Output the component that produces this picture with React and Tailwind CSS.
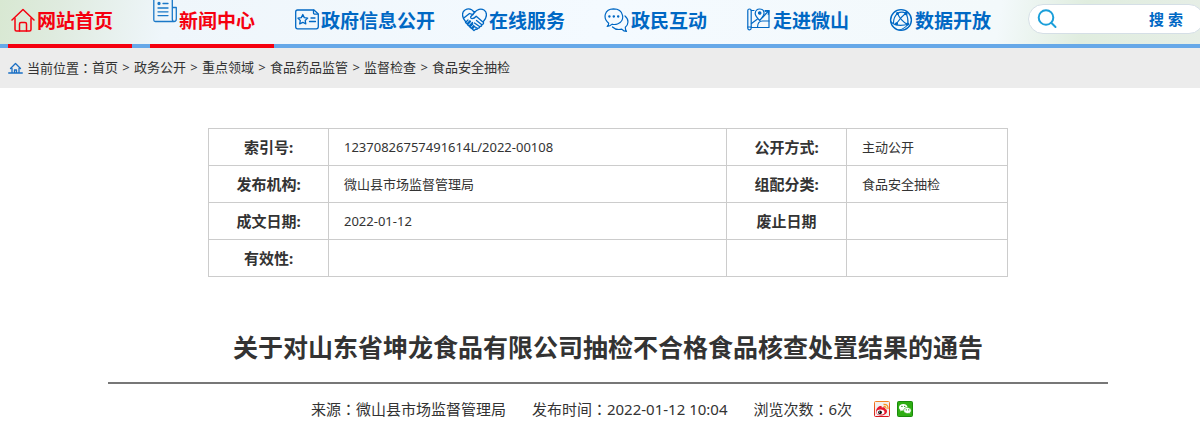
import React, { useState } from "react";
import clsx from "clsx";

const line = {
  fill: "none",
  stroke: "currentColor",
  strokeLinecap: "round",
  strokeLinejoin: "round",
  "aria-hidden": true,
};

function HomeIcon() {
  return (
    <svg width="24" height="24" viewBox="0 0 24 24" strokeWidth="1.500" {...line}>
      <path d="M1 12 12 1.500 23 12" />
      <path d="M4 10.500V21.500q0 1.500 1.500 1.500h13q1.500 0 1.500-1.500V10.500" />
      <path d="M8.500 23v-7q0-1.500 1.500-1.500h4q1.500 0 1.500 1.500v7" />
    </svg>
  );
}

function NewsIcon() {
  return (
    <svg width="24" height="23" viewBox="0 0 24 23" strokeWidth="1.300" {...line}>
      <path d="M.8 0v20q0 1.500 1.500 1.500h18.700q2.300 0 2.300-2.500V7.500h-4V19q0 2.500 2 2.500M19.300 8V0" />
      <circle cx="6" cy="3.500" r="1" fill="currentColor" />
      <path d="M10 3.500h5M5 8h10M5 11.800h10M5 15.600h10" />
    </svg>
  );
}

function InfoIcon() {
  return (
    <svg width="24" height="24" viewBox="0 0 24 24" strokeWidth="1.300" {...line}>
      <path d="M2.500 2h16.500l4.300 4V18.500q0 2.300-2 2.300H2.500Q.7 20.800.7 19V4q0-2 1.800-2z" />
      <path d="M18.500 2.200v2.500q0 1.500 1.500 1.500h3" />
      <path d="m7.800 6.500 1.500 3.100 3.400.5-2.500 2.400.6 3.400-3-1.600-3.100 1.600.6-3.400-2.400-2.400 3.400-.5z" />
      <path d="M16 10h4M14.500 13.500h6" />
    </svg>
  );
}

function ServiceIcon() {
  return (
    <svg width="25" height="24" viewBox="0 0 25 24" strokeWidth="1.300" {...line}>
      <path d="M3.500 13.500C-.5 9-.3 4 3 2c3.200-1.800 7-.8 9.500 2.500C15 1.200 19 .2 22 2c3.200 2 3.500 7-.6 11.500" />
      <path d="m1.800 10 5.700-4.500 3.500 1.200" />
      <path d="M12.500 4.500 8.700 8.700q-.3 1.800 1.500 2 2-.2 4-2.500l7.300 6.300q.4 1.800-1.500 2 0 1.900-2 1.900-.3 1.900-2 1.700-.5 1.700-2.300 1.200" />
      <path d="m14.500 12.500 5 4M12.500 15l5 3.500M11.500 18l4.200 2.500" />
      <path d="m6 12-2.500 2.500 1.500 1.300 3-3M8.500 13.500 5.500 16.700 7 18l3.500-3.500M10.800 16l-3 3 1.500 1.300 2.500-2.500M12 19l-1.800 2 1.800 1.600 2-1.600" />
    </svg>
  );
}

function ChatIcon() {
  return (
    <svg width="25" height="25" viewBox="0 0 25 25" strokeWidth="1.200" {...line}>
      <path d="M4.700 15.200C-1.500 10.200.5 1 9.500.8c10.500 0 12.200 12.200 4 15.200-2.500.9-4 .5-5.300.2-1.500 1.500-3 2.300-5 2.300 1.200-1 1.500-2 1.500-3.300z" />
      <path d="M21 8c4.200 3.500 3.600 8.500.3 11.200-.1 2 .4 3 1.200 4.300-2 0-3.500-.8-4.800-2.300-4 .8-7 0-9.200-2.200" />
      <path d="M5.300 8.500h.2M9.700 8.500h.2M14.100 8.500h.2" strokeWidth="2.300" />
    </svg>
  );
}

function MapIcon() {
  return (
    <svg width="24" height="24" viewBox="0 0 24 24" strokeWidth="1.200" {...line}>
      <path d="M.8 2.500q0-1.500 1.700-1.500t1.700 1.500v17.500q0 1.800-1.700 1.800T.8 20z" />
      <path d="M4.200 2.500H7M18 2.500h4v17H4.200M.8 19h3.400" />
      <path d="M12.700 12.500C9.200 9 8 7.300 8.200 5.200 8.500 2.500 10.500 1 12.700 1s4.200 1.500 4.400 4c.1 2.500-1.500 4.300-4.400 7.500z" />
      <circle cx="12.700" cy="5" r="1.200" fill="currentColor" />
      <path d="m4.500 15.500 5.700-4.300M15.500 9.500l5.500-6M18 3.500l4-.8-.8 3.800M10.500 19.500q0-6.500 5-6.500H22" />
    </svg>
  );
}

function DataIcon() {
  return (
    <svg width="24" height="24" viewBox="0 0 24 24" strokeWidth="1.100" {...line}>
      <circle cx="12" cy="12" r="10.400" strokeWidth="1.400" />
      <path d="M8.500 5.500C5.500 8 4.500 11 4.500 15M8.500 5.500q4-2.500 8-.5M8.500 5.500q3 7 10 11" />
      <path d="M17 5q2.500 5 2 11.500M17 5Q12 9 7.500 15.500M2 14q6 5.500 18 2M10 22q5-1 9-5.500" />
      <circle cx="8.500" cy="5.500" r=".9" fill="currentColor" />
      <circle cx="17" cy="5.500" r="1.100" fill="currentColor" />
      <circle cx="7.500" cy="15.700" r="1" fill="currentColor" />
      <circle cx="18.500" cy="16" r="1" fill="currentColor" />
    </svg>
  );
}

function WeiboIcon() {
  return (
    <svg width="16" height="16" viewBox="0 0 16 16" aria-hidden="true">
      <defs>
        <linearGradient id="weibo" x1="0" y1="0" x2="0" y2="1">
          <stop offset="0" stopColor="#f58220" />
          <stop offset="1" stopColor="#d7141e" />
        </linearGradient>
      </defs>
      <rect x=".5" y=".5" width="15" height="15" rx="1" fill="#f3efed" stroke="url(#weibo)" />
      <path d="M2 10.500C2 7.500 5 4.500 7 5c1 .3.800 1.300.8 1.700 2-.8 3.500-.4 3.200 1.300 1.500.3 2 1.200 2 2.300C13 13 10 14.500 7 14.500s-5-1.500-5-4z" fill="#e6162d" />
      <ellipse cx="6.500" cy="11" rx="4" ry="2.600" fill="#fff" />
      <circle cx="6" cy="11.300" r="1.900" fill="#111" />
      <circle cx="5.400" cy="11" r=".6" fill="#fff" />
      <path d="M9.500 5.500q2.700-.4 2.500 2.300M9.500 3.300Q14.500 3 14 8" fill="none" stroke="#f7941d" strokeWidth="1.200" />
    </svg>
  );
}

function WechatIcon() {
  return (
    <svg width="16" height="16" viewBox="0 0 16 16" aria-hidden="true">
      <rect x=".5" y=".5" width="15" height="15" rx="1" fill="#2eae12" stroke="#1b8a0c" />
      <path d="M6.300 3C3.800 3 2 4.500 2 6.400c0 1.100.6 2 1.500 2.600L3.200 10.500l1.600-.9c1 .2 1.700.2 2.500 0C10 9.300 10.800 7.800 10.500 6 10.200 4.300 8.500 3 6.300 3z" fill="#fff" />
      <path d="M10.300 6.500C8.200 6.500 6.700 7.800 6.700 9.500s1.700 3 3.800 3c.5 0 1-.1 1.400-.2l1.500.8-.4-1.300c.8-.6 1.200-1.400 1.200-2.300 0-1.700-1.700-3-3.900-3z" fill="#fff" stroke="#2eae12" strokeWidth=".6" />
      <path d="M4.900 5.400h.1M7.700 5.400h.1M9.200 8.800h.1M11.700 8.800h.1" stroke="#1b8a0c" strokeWidth="1.200" strokeLinecap="round" />
    </svg>
  );
}

const menu = [
  { name: "网站首页", icon: HomeIcon, active: true },
  { name: "新闻中心", icon: NewsIcon, active: true, raised: true },
  { name: "政府信息公开", icon: InfoIcon },
  { name: "在线服务", icon: ServiceIcon },
  { name: "政民互动", icon: ChatIcon },
  { name: "走进微山", icon: MapIcon },
  { name: "数据开放", icon: DataIcon },
];

const path = ["首页", "政务公开", "重点领域", "食品药品监管", "监督检查", "食品安全抽检"];

const rows = [
  ["索引号:", "12370826757491614L/2022-00108", "公开方式:", "主动公开"],
  ["发布机构:", "微山县市场监督管理局", "组配分类:", "食品安全抽检"],
  ["成文日期:", "2022-01-12", "废止日期", ""],
  ["有效性:", "", "", ""],
];

// full-width colon centred in its cell
function Colon() {
  return <span className="font-['Noto_Sans_CJK_TC',sans-serif]">：</span>;
}

function Header() {
  const [search, setSearch] = useState("");

  return (
    <header className="flex h-12 border-b-4 border-[#66a8e8] bg-[linear-gradient(100deg,#d8e8d2_0%,#dfebdf_5%,#eff6fb_14%,#f4faff_50%,#f3f9fb_83%,#e0eddf_90%,#e6eee6_100%)] pl-2">
      <nav>
        <ul className="flex gap-[18px]">
          {menu.map(({ name, icon: Icon, active, raised }) => (
            <li key={name} className="-mb-1 shrink-0">
              <a
                href="#"
                className={clsx(
                  "flex h-12 min-w-[124px] border-b-4 pr-[7px] text-[19px] font-bold leading-[42px] whitespace-nowrap",
                  active
                    ? "border-[#f5000f] text-[#f5000f]"
                    : "border-transparent text-[#0068c4]"
                )}
              >
                <span
                  className={clsx(
                    "flex h-10 w-[29px] shrink-0 justify-center",
                    raised ? "items-start text-[#1a78c8]" : "items-center"
                  )}
                >
                  <Icon />
                </span>
                {name}
              </a>
            </li>
          ))}
        </ul>
      </nav>
      <form
        className="mt-1 ml-[18px] flex h-[30px] w-[176px] shrink-0 items-center rounded-full border border-[#d5dfe6] bg-white pr-5 pl-2"
        onSubmit={(e) => e.preventDefault()}
      >
        <svg width="20" height="20" viewBox="0 0 20 20" strokeWidth="2" className="shrink-0 text-[#1b9fda]" {...line}>
          <circle cx="9" cy="8.500" r="7.300" />
          <path d="m14.500 14 4 4" />
        </svg>
        <input
          type="text"
          aria-label="搜索"
          value={search}
          onChange={(e) => setSearch(e.target.value)}
          className="min-w-0 flex-1 px-1 text-sm outline-none"
        />
        <button type="submit" className="text-[15px] font-bold text-[#0068c4]">
          搜 索
        </button>
      </form>
    </header>
  );
}

function App() {
  return (
    <div className="overflow-x-clip bg-white font-['Noto_Sans','Noto_Sans_CJK_SC',sans-serif] text-[#333]">
      <Header />
      <div className="flex h-10 items-center bg-[#ececec] pl-2 text-[13px]">
        <svg width="15" height="12" viewBox="0 0 15 12" strokeWidth="1.300" className="mr-1 text-[#1a6fc4]" {...line}>
          <path d="m2.500 6.500 5-5 5 5M4 6.500V11M11 6.500V11M6.500 11V8h2v3M.7 11h13.600" />
        </svg>
        <span>
          当前位置
          <Colon />
        </span>
        {path.map((item, i) => (
          <React.Fragment key={item}>
            {i > 0 && <span className="w-4 text-center">&gt;</span>}
            <a href="#">{item}</a>
          </React.Fragment>
        ))}
      </div>

      <main className="pt-10 pl-4">
        <div className="mx-auto max-w-[1000px]">
          <table className="mx-auto w-4/5 table-fixed border-collapse text-[13px]">
            <colgroup>
              <col className="w-[120px]" />
              <col />
              <col className="w-[120px]" />
              <col className="w-[161px]" />
            </colgroup>
            <tbody>
              {rows.map(([label, value, label2, value2]) => (
                <tr key={label} className="h-[37px]">
                  <th className="border border-[#ccc] text-[15px] leading-5">{label}</th>
                  <td className="border border-[#ccc] px-[15px] leading-5">{value}</td>
                  <th className="border border-[#ccc] text-[15px] leading-5">{label2}</th>
                  <td className="border border-[#ccc] px-[15px] leading-5">{value2}</td>
                </tr>
              ))}
            </tbody>
          </table>

          <h1 className="mt-[50px] border-b-2 border-[#777] pb-[15px] text-center text-[25px] leading-10 font-bold">
            关于对山东省坤龙食品有限公司抽检不合格食品核查处置结果的通告
          </h1>
          <div className="flex items-center justify-center gap-[26px] pt-[15px] pl-2 text-[15px] leading-5">
            <span>
              来源
              <Colon />
              微山县市场监督管理局
            </span>
            <span>
              发布时间
              <Colon />
              2022-01-12 10:04
            </span>
            <span>
              浏览次数
              <Colon />
              6次
            </span>
            <span className="-ml-1 flex gap-[7px]">
              <a href="#" aria-label="微博">
                <WeiboIcon />
              </a>
              <a href="#" aria-label="微信">
                <WechatIcon />
              </a>
            </span>
          </div>
        </div>
      </main>
    </div>
  );
}

export default App;
